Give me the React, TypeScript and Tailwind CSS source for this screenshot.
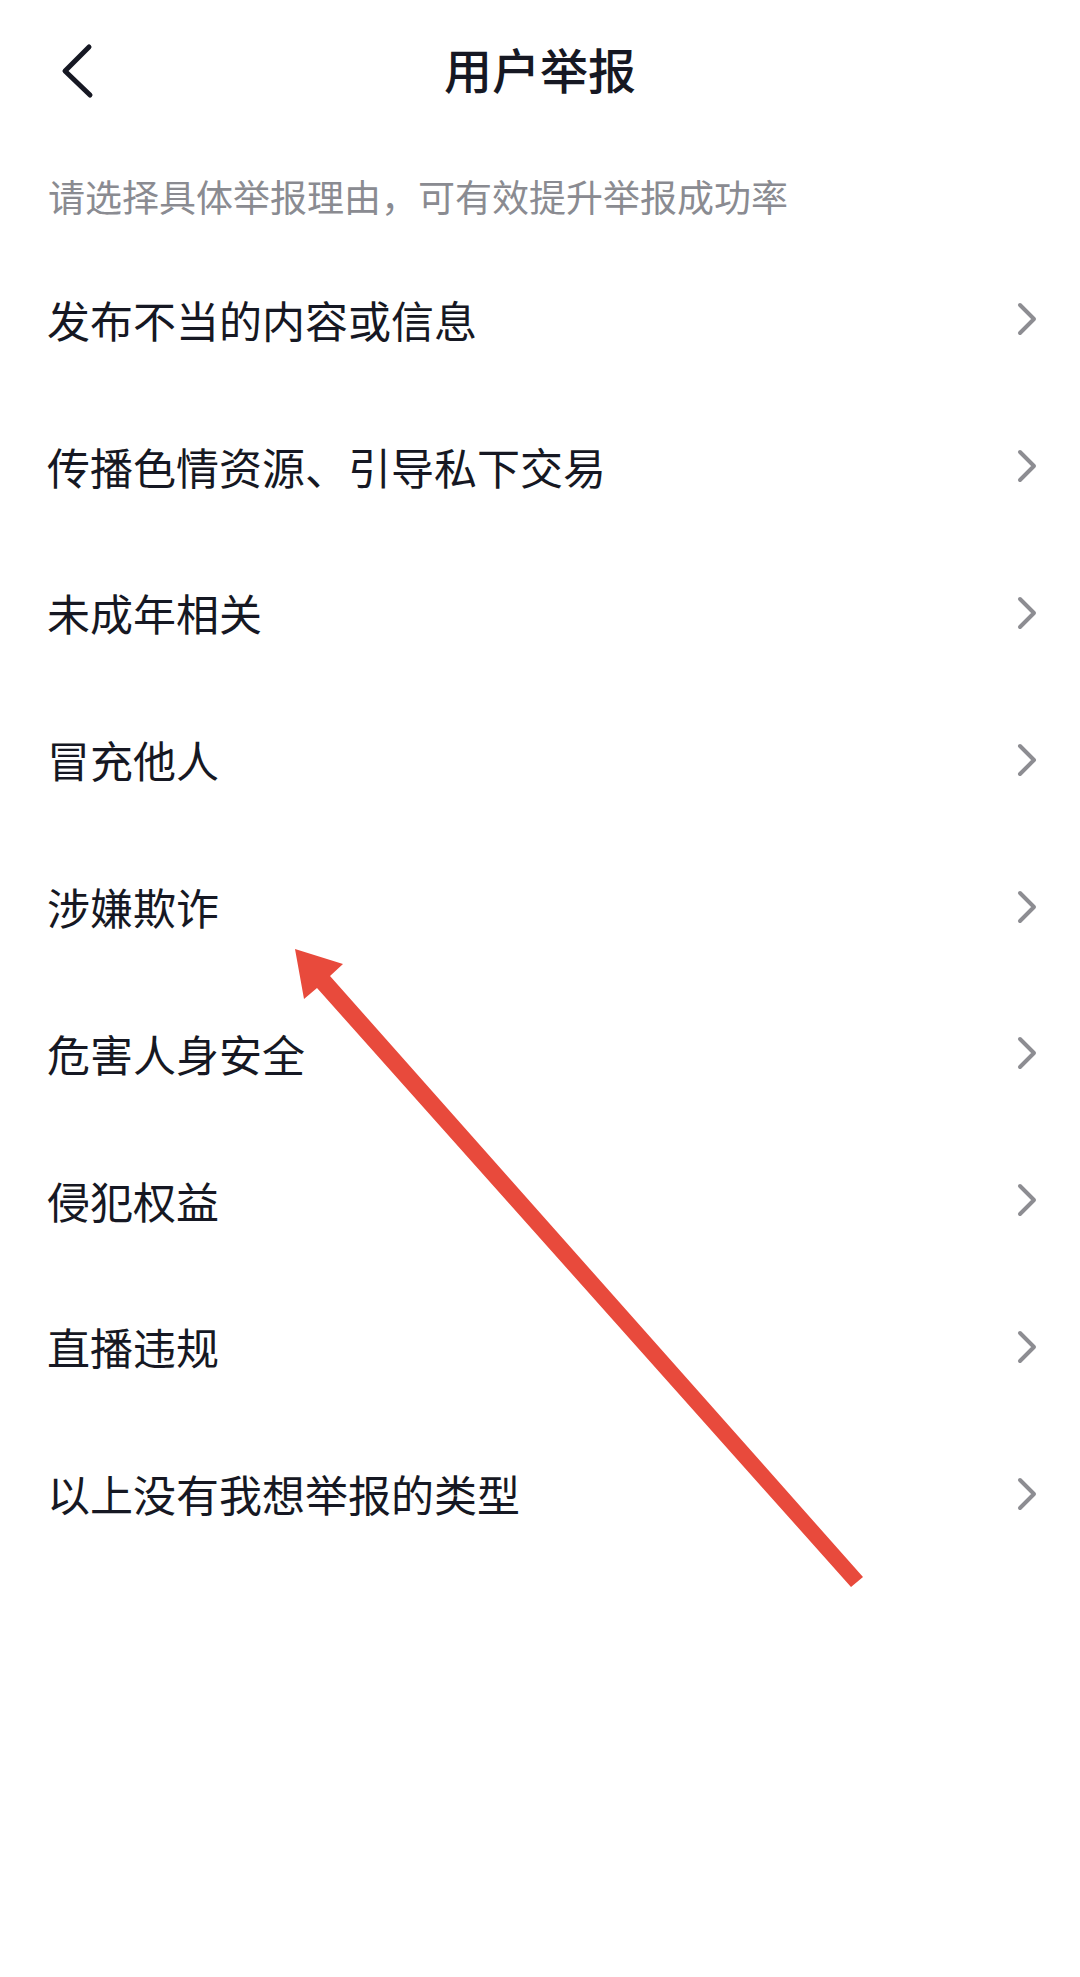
import React from "react";

const items = [
  "发布不当的内容或信息",
  "传播色情资源、引导私下交易",
  "未成年相关",
  "冒充他人",
  "涉嫌欺诈",
  "危害人身安全",
  "侵犯权益",
  "直播违规",
  "以上没有我想举报的类型",
];

const font = { fontFamily: '"Noto Sans CJK SC", "Noto Sans", sans-serif' };

export default function App() {
  return (
    <div className="relative w-[1080px] h-[1977px] bg-white overflow-hidden" style={font}>
      <header className="relative h-[144px] flex items-center justify-center pb-[8px]">
        <button className="absolute left-[50px] top-[34px] w-[56px] h-[76px] flex items-center justify-center">
          <svg width="56" height="76" viewBox="0 0 56 76">
            <path d="M39 13 L15 37 L40 61" fill="none" stroke="#161823" strokeWidth="5" strokeLinecap="round" strokeLinejoin="round" />
          </svg>
        </button>
        <h1 className="text-[48px] leading-none font-medium text-[#161823] tracking-normal">用户举报</h1>
      </header>
      <div className="h-[102px] flex items-center pl-[48px] pt-[2px]">
        <p className="text-[37px] leading-none text-[#8a8b91]">请选择具体举报理由，可有效提升举报成功率</p>
      </div>
      <ul>
        {items.map((t) => (
          <li key={t} className="h-[146.8px] flex items-center justify-between pl-[47px] pr-[40px]">
            <span className="text-[43px] leading-none text-[#161823]">{t}</span>
            <svg width="30" height="40" viewBox="0 0 30 40">
              <path d="M10 6 L24 20 L10 34" fill="none" stroke="#8d8d92" strokeWidth="4" strokeLinecap="round" strokeLinejoin="round" />
            </svg>
          </li>
        ))}
      </ul>
      <svg className="absolute left-0 top-0 pointer-events-none" width="1080" height="1977" viewBox="0 0 1080 1977">
        <polygon points="295,949 343,964 330,976 863,1577 851,1587 317,988 304,999" fill="#e84a3c" />
      </svg>
    </div>
  );
}
